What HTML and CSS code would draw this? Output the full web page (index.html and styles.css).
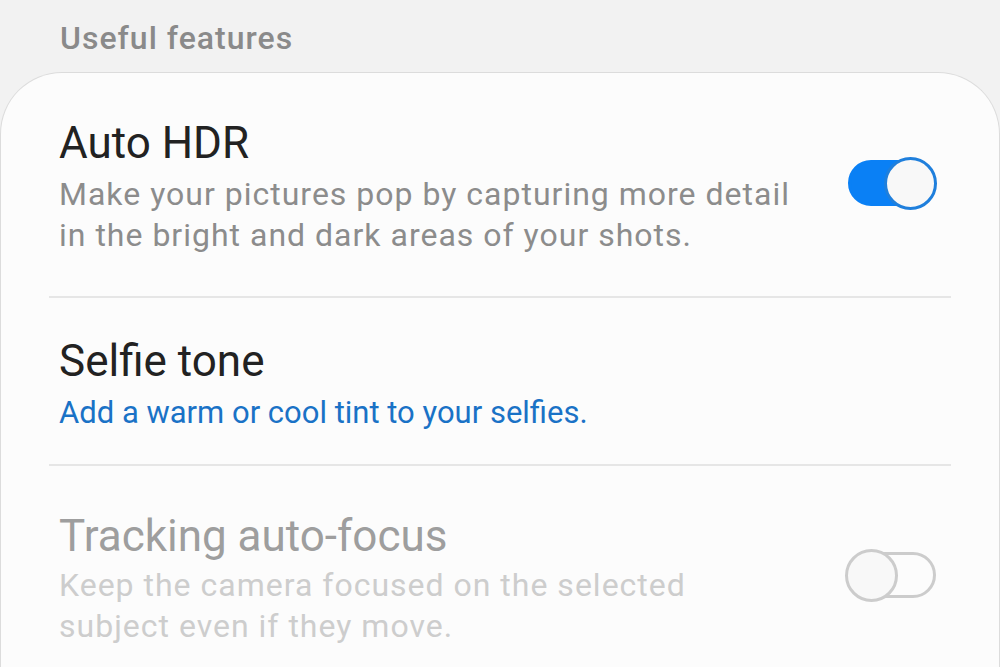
FILE: index.html
```html
<!DOCTYPE html>
<html lang="en">
<head>
    <meta charset="UTF-8">
    <meta name="viewport" content="width=device-width, initial-scale=1.0">
    <title>Camera settings</title>
    <link rel="stylesheet" href="styles.css">
</head>
<body>
    <h2 class="section-title">Useful features</h2>

    <div class="card">
        <div class="row first">
            <div class="row-text">
                <div class="row-title">Auto HDR</div>
                <div class="row-desc">Make your pictures pop by capturing more detail in the bright and dark areas of your shots.</div>
            </div>
            <span class="switch on"><span class="knob"></span></span>
        </div>

        <div class="row row-link">
            <div class="row-text">
                <div class="row-title">Selfie tone</div>
                <div class="row-desc link">Add a warm or cool tint to your selfies.</div>
            </div>
        </div>

        <div class="row disabled">
            <div class="row-text">
                <div class="row-title">Tracking auto-focus</div>
                <div class="row-desc">Keep the camera focused on the selected subject even if they move.</div>
            </div>
            <span class="switch"><span class="knob"></span></span>
        </div>
    </div>
</body>
</html>
```

FILE: styles.css
```css
body {
    margin: 0;
    background-color: #f2f2f2;
    font-family: Roboto, "Liberation Sans", sans-serif;
    overflow: hidden;
}

.section-title {
    margin: 0;
    padding: 18px 60px 14px;
    font-size: 32px;
    font-weight: 500;
    line-height: 40px;
    letter-spacing: 1px;
    color: #8a8a8a;
}

.card {
    background-color: #fcfcfc;
    border: 1px solid #dcdcdc;
    border-bottom: none;
    border-radius: 62px 62px 0 0;
    padding: 0 48px;
    height: 600px;
}

.row {
    display: flex;
    align-items: center;
    padding: 44px 15px 40px 10px;
    border-bottom: 2px solid #e6e6e6;
}

.row-link {
    padding-top: 37px;
    padding-bottom: 31px;
}

.row:last-child {
    border-bottom: none;
}

.row-text {
    flex: 1;
    max-width: 752px;
}

.disabled .row-text {
    max-width: 700px;
}

.row-title {
    font-size: 44px;
    line-height: 52px;
    color: #222;
}

.row-desc {
    margin-top: 5px;
    font-size: 32px;
    line-height: 41px;
    letter-spacing: 1px;
    color: #8c8c8c;
}

.disabled .row-desc {
    margin-top: 3px;
    color: #cdcdcd;
}

.row-desc.link {
    font-size: 31px;
    letter-spacing: 0;
    color: #1a72c6;
}

.disabled .row-title {
    color: #9e9e9e;
}

.switch {
    position: relative;
    margin-left: auto;
    margin-bottom: 8px;
    width: 88px;
    height: 46px;
    border-radius: 23px;
    box-sizing: border-box;
    border: 3px solid #cccccc;
    background-color: #fcfcfc;
}

.switch .knob {
    position: absolute;
    top: -6px;
    left: -6px;
    width: 53px;
    height: 53px;
    border-radius: 50%;
    box-sizing: border-box;
    border: 3px solid #cccccc;
    background-color: #f8f8f8;
}

.switch.on {
    border-color: #0a80f5;
    background-color: #0a80f5;
}

.switch.on .knob {
    left: auto;
    right: -4px;
    border-color: #1f7fdc;
}
```
